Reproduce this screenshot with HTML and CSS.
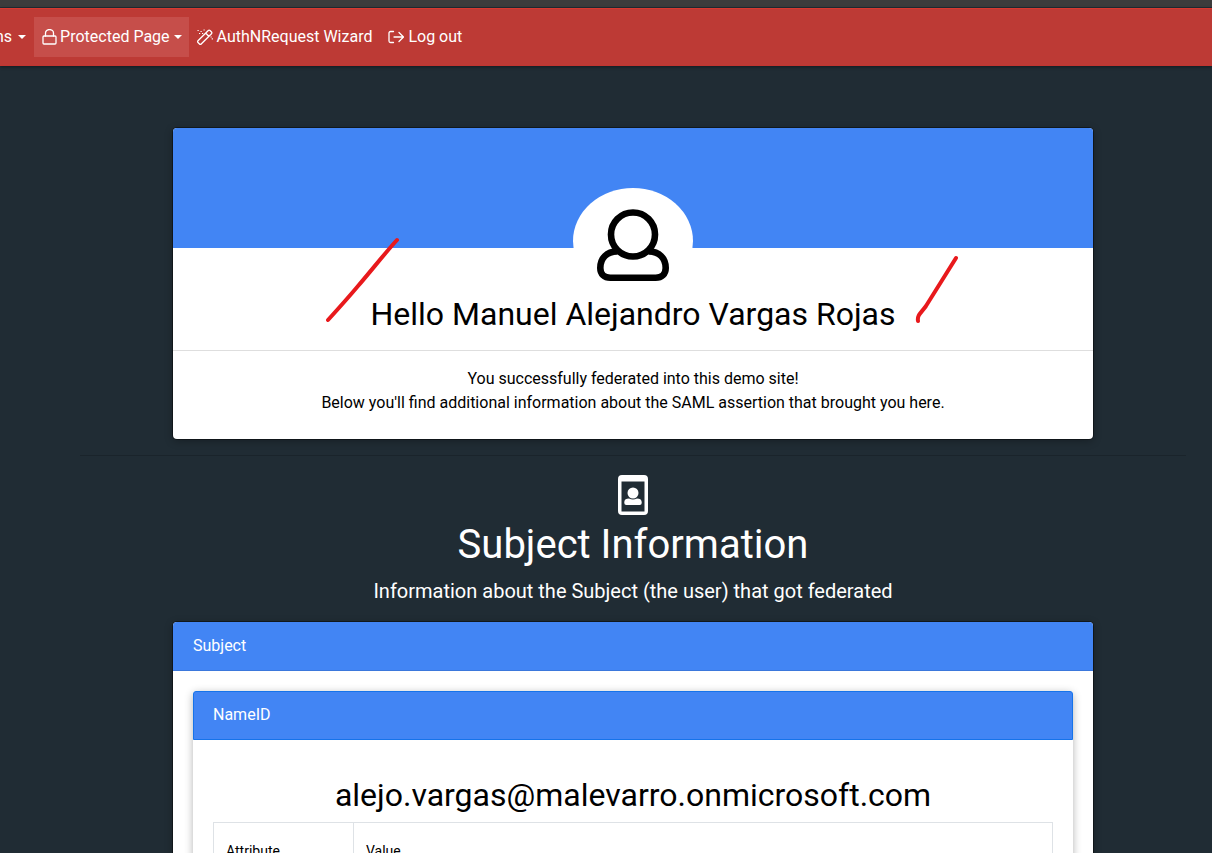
FILE: index.html
```html
<!DOCTYPE html>
<html lang="en">
<head>
<meta charset="utf-8">
<title>Protected Page</title>
<link rel="stylesheet" href="styles.css">
</head>
<body>
<div class="top-strip"></div>
<nav class="navbar">
  <a class="nav-link nav-cut" href="#">ns<span class="caret"></span></a>
  <a class="nav-link active" href="#"><svg class="icon" viewBox="0 0 16 16"><rect x="1" y="7" width="13" height="8" rx="1"/><path d="M3.500 7V4a4 3.500 0 0 1 8 0v3"/></svg><span>Protected Page</span><span class="caret"></span></a>
  <a class="nav-link" href="#"><svg class="icon" viewBox="0 0 16 16"><path d="M1 11.800L11.300 1.500a1.200 1.200 0 0 1 1.700 0l1.500 1.500a1.200 1.200 0 0 1 0 1.700L4.200 15a1.200 1.200 0 0 1-1.700 0L1 13.500a1.200 1.200 0 0 1 0-1.700zM8.800 4.200l3 3"/><path class="spark" d="M.5 1.500h1.200M3.500 2.500h1.200M6.500 1h1.200M2 4.500h1.200M5 4.500h1.200M13.500 8h1.200M14.700 9.800h1.200"/></svg><span>AuthNRequest Wizard</span></a>
  <a class="nav-link" href="#"><svg class="icon" viewBox="0 0 16 16"><path d="M5.500 2.500h-3A1.500 1.500 0 0 0 1 4v8a1.500 1.500 0 0 0 1.500 1.500h3M6 8h9.500M11 3.500L15.500 8 11 12.500"/></svg><span>Log out</span></a>
</nav>
<main class="content">
  <section class="card hero">
    <div class="cover">
      <svg class="avatar" viewBox="0 0 120 106"><ellipse class="halo" cx="60" cy="53" rx="60" ry="53"/><g class="person"><circle cx="60" cy="46.500" r="22"/><path d="M44 63.500C34 63.500 27.300 70 27.300 80c0 6 4 9.800 10 9.800h45.400c6 0 10-3.800 10-9.800 0-10-6.700-16.500-16.700-16.500"/></g></svg>
    </div>
    <h2 class="name">Hello Manuel Alejandro Vargas Rojas</h2>
    <p class="intro">You successfully federated into this demo site!<br>Below you'll find additional information about the SAML assertion that brought you here.</p>
    <svg class="marks" viewBox="0 0 640 90"><path d="M77 6C65 19 51 37 38 52 28 64 18 75 8 86M636 24L606 72C601 79 597 81 598 87"/></svg>
  </section>
  <hr class="rule">
  <header class="section-head">
    <svg class="badge" viewBox="0 0 30 40"><path class="frame" d="M4 0h22a4 4 0 0 1 4 4v32a4 4 0 0 1-4 4H4a4 4 0 0 1-4-4V4a4 4 0 0 1 4-4zM3.500 6.500v30h23v-30z"/><circle cx="15" cy="18" r="5.500"/><path d="M6.300 28v-1c0-2.500 2-3.500 4.700-3.500q4 2 8 0c2.700 0 4.700 1 4.700 3.500v1a2 2 0 0 1-2 2H8.300a2 2 0 0 1-2-2z"/></svg>
    <h1 class="title">Subject Information</h1>
    <p class="lead">Information about the Subject (the user) that got federated</p>
  </header>
  <section class="card">
    <div class="card-header">Subject</div>
    <div class="card-body">
      <section class="card inner">
        <div class="card-header">NameID</div>
        <div class="card-body">
          <h2 class="email">alejo.vargas@malevarro.onmicrosoft.com</h2>
          <table class="attributes">
            <thead><tr><th class="key">Attribute</th><th>Value</th></tr></thead>
          </table>
        </div>
      </section>
    </div>
  </section>
</main>
</body>
</html>
```
FILE: styles.css
```css
* { box-sizing: border-box; }
html { overflow: hidden; }
body {
  margin: 0;
  background: #202c34;
  color: #000;
  font: 16px/24px Roboto, sans-serif;
}
h1, h2, p { margin: 0; font-weight: 400; }

.top-strip { height: 8px; background: #3c3c3c; border-bottom: 1px solid #202c34; }
.navbar {
  display: flex;
  align-items: center;
  padding: 8px 0;
  background: #bd3a35;
  border-top: 1px solid #d63a30;
  border-bottom: 1px solid #c23530;
  box-shadow: 0 1px 3px rgba(0, 0, 0, .4);
}
.nav-link {
  display: flex;
  align-items: center;
  gap: 4px;
  padding: 8px;
  color: #fff;
  text-decoration: none;
  white-space: nowrap;
}
.nav-cut { padding-left: 0; margin-left: -5px; }
.active { gap: 2px; padding-right: 7px; background: #c64e4a; }
.icon { width: 16px; height: 16px; fill: none; stroke: #fff; stroke-width: 1.3; stroke-linecap: round; stroke-linejoin: round; }
.spark { stroke-width: 1.2; stroke-linecap: butt; }
.caret { border: 4px solid transparent; border-top-color: #fff; border-bottom: 0; margin-left: 2px; }

.content { padding: 62px 26px 0 80px; }
.card {
  position: relative;
  max-width: 920px;
  margin: 0 auto;
  background: #fff;
  border-radius: 4px;
  box-shadow: 0 0 0 1px rgba(0, 0, 0, .4), 0 2px 8px rgba(0, 0, 0, .3);
}
.cover {
  display: flex;
  justify-content: center;
  height: 120px;
  padding-top: 60px;
  background: #4285f4;
  border-radius: 4px 4px 0 0;
}
.avatar { width: 120px; height: 106px; flex: none; }
.halo { fill: #fff; }
.person { fill: none; stroke: #000; stroke-width: 6.6; }
.name {
  padding: 46px 20px 16px;
  border-bottom: 1px solid #dedede;
  font-size: 32px;
  line-height: 40px;
  text-align: center;
}
.intro { padding: 16px 20px 24px; text-align: center; }
.marks {
  position: absolute;
  left: 147px;
  top: 106px;
  width: 640px;
  height: 90px;
  fill: none;
  stroke: #e8191c;
  stroke-width: 4;
  stroke-linecap: round;
}
.rule { margin: 16px 0; border: 0; border-top: 1px solid #1a242b; }

.section-head { color: #fff; text-align: center; }
.badge { display: block; width: 30px; height: 40px; margin: 19px auto 6px; fill: #fff; }
.frame { fill-rule: evenodd; }
.title { font-size: 40px; line-height: 48px; }
.lead { padding: 7px 0 16px; font-size: 20px; line-height: 30px; }

.card-header {
  padding: 12px 20px;
  color: #fff;
  background: #4285f4;
  border-bottom: 1px solid #3b78dc;
  border-radius: 4px 4px 0 0;
}
.card-body { padding: 20px; }
.inner { box-shadow: 0 2px 8px rgba(0, 0, 0, .3); }
.inner > .card-header { border: 1px solid #1673ea; padding: 11px 19px 12px; border-radius: 3px 3px 0 0; }
.email { padding: 15px 0 7px; font-size: 32px; line-height: 40px; text-align: center; }
.attributes { width: 100%; border-collapse: collapse; font-size: 14px; line-height: 20px; }
.attributes th { padding: 18px 12px; border: 1px solid #dee2e6; font-weight: 400; text-align: left; }
.key { width: 140px; }
```
